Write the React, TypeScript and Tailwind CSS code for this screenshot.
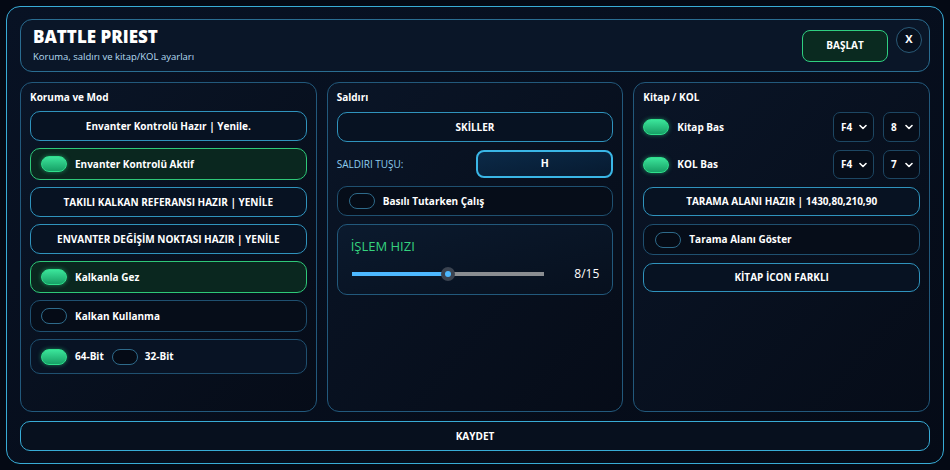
import React from "react";

const font = { fontFamily: '"Open Sans", "Noto Sans", sans-serif' };

function Toggle({ on }: { on: boolean }) {
  return on ? (
    <div className="w-[26px] h-[16px] rounded-[8px] border border-[#2fe08c] bg-gradient-to-b from-[#3be49a] to-[#16a066] shadow-[0_0_4px_rgba(46,224,140,0.5)] shrink-0" />
  ) : (
    <div className="w-[26px] h-[16px] rounded-[8px] border border-[#2e6a8a] bg-[#050b16] shrink-0" />
  );
}

function Btn({ children, h = "h-[30px]" }: { children: React.ReactNode; h?: string }) {
  return (
    <div
      className={`${h} rounded-[10px] border border-[#2f93bd] bg-[#071222] flex items-center justify-center text-white font-bold text-[10px]`}
    >
      {children}
    </div>
  );
}

function ToggleRow({ on, label, h = "h-[32px]" }: { on: boolean; label: string; h?: string }) {
  return (
    <div
      className={`${h} rounded-[10px] border flex items-center gap-[8px] px-[10px] ${
        on ? "border-[#2ec878] bg-[#0a271f]" : "border-[#1f5070] bg-[#060d19]"
      }`}
    >
      <Toggle on={on} />
      <span className="text-white font-bold text-[10px]">{label}</span>
    </div>
  );
}

function Chevron() {
  return (
    <svg width="8" height="6" viewBox="0 0 8 6" className="shrink-0">
      <path d="M1 1.5 L4 4.5 L7 1.5" stroke="white" strokeWidth="1.6" fill="none" strokeLinecap="round" strokeLinejoin="round" />
    </svg>
  );
}

function Select({ value, w }: { value: string; w: string }) {
  return (
    <div className={`${w} h-full rounded-[7px] border border-[#1d4763] bg-[#060d19] flex items-center justify-between pl-[7px] pr-[6px] text-white font-bold text-[10px]`}>
      <span>{value}</span>
      <Chevron />
    </div>
  );
}

function Panel({ title, children, gap }: { title: string; children: React.ReactNode; gap: string }) {
  return (
    <div className={`rounded-[12px] border border-[#22597c] bg-gradient-to-br from-[#0a1527] to-[#060c18] px-[9px] pt-[7px] flex flex-col ${gap}`}>
      <div className="h-[14px] leading-[14px] text-white font-bold text-[10px]">{title}</div>
      {children}
    </div>
  );
}

export default function App() {
  return (
    <div style={font} className="w-[950px] h-[470px] bg-[#040914] p-[6px]">
      <div className="h-full rounded-[14px] border border-[#38acd6] bg-gradient-to-br from-[#081224] to-[#050b17] px-[13px] pt-[12px] pb-[12px] flex flex-col">
        {/* Header */}
        <div className="h-[53px] rounded-[12px] border border-[#2a6d91] bg-[#0a1628] flex items-center justify-between pl-[12px] pr-[7px] shrink-0">
          <div className="flex flex-col">
            <div className="text-white font-extrabold text-[17px] leading-[20px]">BATTLE PRIEST</div>
            <div className="text-[#b5dcf2] text-[9.5px] leading-[14px] mt-[3px]">Koruma, saldırı ve kitap/KOL ayarları</div>
          </div>
          <div className="flex items-center gap-[8px]">
            <div className="w-[86px] h-[32px] rounded-[8px] border-[1.5px] border-[#2fcf80] bg-[#0a2a20] flex items-center justify-center text-white font-bold text-[10px]">
              BAŞLAT
            </div>
            <div className="w-[26px] h-[26px] rounded-full border border-[#2a5a78] bg-[#07101e] flex items-center justify-center text-white font-bold text-[11px] mb-[12px]">
              X
            </div>
          </div>
        </div>

        {/* Columns */}
        <div className="grid grid-cols-3 gap-[10px] mt-[10px] h-[330px] shrink-0">
          <Panel title="Koruma ve Mod" gap="gap-[7px]">
            <Btn>Envanter Kontrolü Hazır | Yenile.</Btn>
            <ToggleRow on label="Envanter Kontrolü Aktif" />
            <Btn>TAKILI KALKAN REFERANSI HAZIR | YENİLE</Btn>
            <Btn>ENVANTER DEĞİŞİM NOKTASI HAZIR | YENİLE</Btn>
            <ToggleRow on label="Kalkanla Gez" />
            <ToggleRow on={false} label="Kalkan Kullanma" />
            <div className="h-[35px] rounded-[10px] border border-[#1f5070] bg-[#081324] flex items-center px-[10px]">
              <Toggle on />
              <span className="text-white font-bold text-[10px] ml-[8px]">64-Bit</span>
              <div className="ml-[8px]">
                <Toggle on={false} />
              </div>
              <span className="text-white font-bold text-[10px] ml-[7px]">32-Bit</span>
            </div>
          </Panel>

          <Panel title="Saldırı" gap="gap-[8px]">
            <Btn>SKİLLER</Btn>
            <div className="h-[28px] flex items-center justify-between">
              <span className="text-[#8ecdee] text-[10px]">SALDIRI TUŞU:</span>
              <div className="w-[137px] h-[28px] rounded-[8px] border-2 border-[#3ab6e6] bg-gradient-to-br from-[#0b2a48] to-[#071a30] flex items-center justify-center text-white font-bold text-[10.5px]">
                H
              </div>
            </div>
            <div className="h-[30px] rounded-[10px] border border-[#1f5070] bg-[#060d19] flex items-center gap-[8px] px-[11px]">
              <Toggle on={false} />
              <span className="text-white font-bold text-[10px]">Basılı Tutarken Çalış</span>
            </div>
            <div className="h-[71px] rounded-[10px] border border-[#22597c] bg-gradient-to-br from-[#0b1a2e] to-[#07101e] px-[13px] pt-[13px]">
              <div className="text-[#35d27e] text-[13px] leading-[16px] font-medium">İŞLEM HIZI</div>
              <div className="flex items-center mt-[11px]">
                <div className="relative w-[192px] h-[14px] ml-[1px] flex items-center">
                  <div className="w-[96px] h-[4px] bg-[#4db8ff]" />
                  <div className="flex-1 h-[4px] bg-[#8a8d91]" />
                  <div className="absolute left-[89px] top-0 w-[14px] h-[14px] rounded-full bg-[#3b4350] flex items-center justify-center">
                    <div className="w-[6px] h-[6px] rounded-full bg-[#4db8ff]" />
                  </div>
                </div>
                <span className="ml-auto text-white text-[12px]">8/15</span>
              </div>
            </div>
          </Panel>

          <Panel title="Kitap / KOL" gap="gap-[8px]">
            <div className="h-[30px] flex items-center">
              <Toggle on />
              <span className="text-white font-bold text-[10px] ml-[8px]">Kitap Bas</span>
              <div className="ml-auto flex h-full gap-[9px]">
                <Select value="F4" w="w-[41px]" />
                <Select value="8" w="w-[37px]" />
              </div>
            </div>
            <div className="h-[29px] flex items-center">
              <Toggle on />
              <span className="text-white font-bold text-[10px] ml-[8px]">KOL Bas</span>
              <div className="ml-auto flex h-full gap-[9px]">
                <Select value="F4" w="w-[41px]" />
                <Select value="7" w="w-[37px]" />
              </div>
            </div>
            <Btn h="h-[29px]">TARAMA ALANI HAZIR | 1430,80,210,90</Btn>
            <div className="h-[31px] rounded-[10px] border border-[#1f5070] bg-[#060d19] flex items-center gap-[8px] px-[11px]">
              <Toggle on={false} />
              <span className="text-white font-bold text-[10px]">Tarama Alanı Göster</span>
            </div>
            <Btn h="h-[29px]">KİTAP İCON FARKLI</Btn>
          </Panel>
        </div>

        {/* Save */}
        <div className="mt-[9px] h-[30px] rounded-[10px] border border-[#38acd6] bg-[#07101e] flex items-center justify-center text-white font-bold text-[10px] shrink-0">
          KAYDET
        </div>
      </div>
    </div>
  );
}
